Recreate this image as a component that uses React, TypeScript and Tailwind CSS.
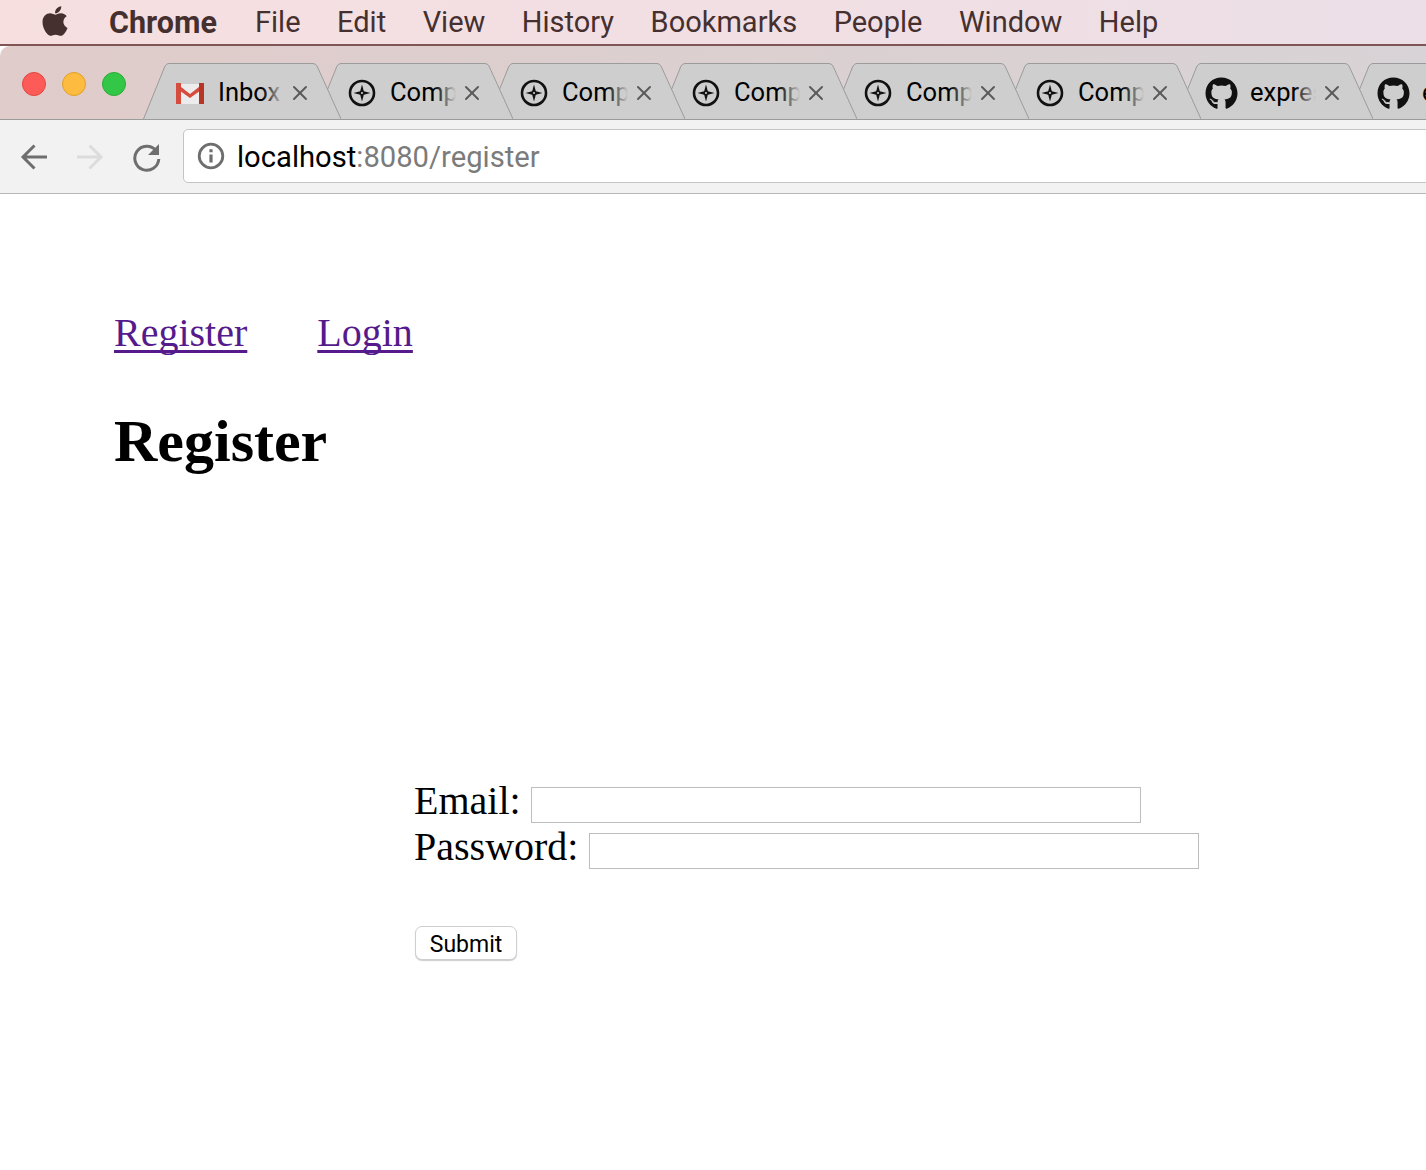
import React from "react";
import { FaApple, FaGithub } from "react-icons/fa";
import { X } from "lucide-react";

const sans = "font-['Roboto','Liberation_Sans',sans-serif]";

const menus = ["File", "Edit", "View", "History", "Bookmarks", "People", "Window", "Help"];

const GmailIcon = () => (
  <svg width="30" height="22" viewBox="0 0 30 22">
    <path d="M1 2h28v20H1z" fill="#ececec" />
    <path d="M1 1l14 11L29 1v5L15 16 1 6z" fill="#d54c3f" />
    <path d="M1 1h5v21H1z" fill="#d54c3f" />
    <path d="M24 1h5v21h-5z" fill="#b63524" />
  </svg>
);

const CompassIcon = () => (
  <svg width="28" height="28" viewBox="0 0 28 28">
    <circle cx="14" cy="14" r="12" fill="none" stroke="#111" strokeWidth="2.600" />
    <path d="M14 5.500l1.800 6.700 6.700 1.800-6.700 1.800-1.800 6.700-1.800-6.700L5.500 14l6.700-1.800z" fill="#111" />
    <circle cx="14" cy="14" r="1.100" fill="#cecece" />
  </svg>
);

const ChevronArrow = ({ flip, color }: { flip?: boolean; color: string }) => (
  <svg className={`shrink-0 ${flip ? "-scale-x-100" : ""}`} width="28" height="28" viewBox="0 0 28 28">
    <path d="M27 14H3M14.500 2.500L3 14l11.500 11.500" fill="none" stroke={color} strokeWidth="3" />
  </svg>
);

const Tab = ({ icon, title, index }: { icon: React.ReactNode; title: string; index: number }) => (
  <div
    className="relative h-[56px] w-[198px] shrink-0 -mr-[26px]"
    style={{ zIndex: 20 - index }}
  >
    <svg className="absolute inset-0" width="198" height="56" viewBox="0 0 198 56">
      <path
        d="M0.500 56L22 3Q23.500 0.500 26 0.500H170Q172.500 0.500 174 3L198 56"
        fill="#cecece"
        stroke="#9b9b9b"
      />
    </svg>
    <div className="relative flex h-full items-center pt-[2px]">
      <div className="flex w-[75px] shrink-0 justify-center pl-[18px] pr-0 pt-[2px]">{icon}</div>
      <div className="relative w-[66px] overflow-hidden">
        <span className={`${sans} block whitespace-nowrap text-[25.500px] leading-[32px] text-black`}>{title}</span>
        <div className="absolute inset-y-0 right-0 w-[22px] bg-gradient-to-r from-transparent to-[#cecece]" />
      </div>
      <X className="ml-[4px] mt-[1px] shrink-0 text-[#5a5a5a]" size={24} strokeWidth={2} />
    </div>
  </div>
);

export default function App() {
  return (
    <div className="h-[1170px] w-[1426px] overflow-hidden bg-white">
      {/* mac menu bar */}
      <div className={`${sans} flex h-[44px] items-center bg-gradient-to-r from-[#f7dfe0] to-[#ecdfe7] pt-[1px] text-[29px] text-[#45302f]`}>
        <FaApple className="ml-[40px] -mt-[4px] w-[30px] shrink-0 text-[#45302f]" size={34} />
        <span className="ml-[39px] w-[146px] shrink-0 text-[30.500px] font-bold">Chrome</span>
        <div className="flex gap-[36.500px]">
          {menus.map((m) => (
            <span key={m}>{m}</span>
          ))}
        </div>
      </div>
      <div className="h-[2px] bg-[#7f5556]" />

      {/* tab strip */}
      <div className="flex h-[74px] items-end overflow-hidden rounded-tl-[10px] border-b border-[#9b9b9b] bg-gradient-to-r from-[#e0ccca] to-[#d8d3d6]">
        <div className="mb-[19px] ml-[22px] flex w-[121px] shrink-0 gap-[16px] self-end pb-[4px]">
          <div className="h-[24px] w-[24px] rounded-full border border-[#e2463f] bg-[#fc5b57]" />
          <div className="h-[24px] w-[24px] rounded-full border border-[#e0a028] bg-[#fdbc40]" />
          <div className="h-[24px] w-[24px] rounded-full border border-[#2aac36] bg-[#33c748]" />
        </div>
        <Tab index={0} icon={<GmailIcon />} title="Inbox" />
        <Tab index={1} icon={<CompassIcon />} title="Compose" />
        <Tab index={2} icon={<CompassIcon />} title="Compose" />
        <Tab index={3} icon={<CompassIcon />} title="Compose" />
        <Tab index={4} icon={<CompassIcon />} title="Compose" />
        <Tab index={5} icon={<CompassIcon />} title="Compose" />
        <Tab index={6} icon={<FaGithub className="text-[#111]" size={33} />} title="express" />
        <Tab index={7} icon={<FaGithub className="text-[#111]" size={33} />} title="express" />
      </div>

      {/* toolbar */}
      <div className="flex h-[74px] items-center border-b border-[#b8b8b8] bg-[#f2f2f2]">
        <div className="ml-[20px]">
          <ChevronArrow color="#6e6e6e" />
        </div>
        <div className="ml-[28px]">
          <ChevronArrow flip color="#dcdcdc" />
        </div>
        <svg className="ml-[27px] shrink-0" width="32" height="32" viewBox="0 0 32 32">
          <path d="M25 9.500A12 12 0 1 0 27.800 18" fill="none" stroke="#6e6e6e" strokeWidth="3" />
          <path d="M28 3v11H17z" fill="#6e6e6e" />
        </svg>
        <div className="mb-[1px] ml-[20px] flex h-[54px] w-[1300px] shrink-0 items-center rounded-[5px] border border-[#c4c4c4] bg-white">
          <svg className="ml-[13px] shrink-0" width="28" height="28" viewBox="0 0 28 28">
            <circle cx="14" cy="14" r="11.800" fill="none" stroke="#6e6e6e" strokeWidth="2.800" />
            <path d="M12.400 12.500h3.200v8h-3.200zM12.400 7.300h3.200v3h-3.200z" fill="#6e6e6e" />
          </svg>
          <span className={`${sans} ml-[12px] pt-[4px] text-[29.200px] text-black`}>
            localhost<span className="text-[#7b7b7b]">:8080/register</span>
          </span>
        </div>
      </div>

      {/* page */}
      <div className="font-['Liberation_Serif',serif] text-black">
        <div className="ml-[114px] mt-[114px] flex gap-[70px] text-[40px] leading-[50px] text-[#551a8b]">
          <a href="#" className="underline decoration-[3px] underline-offset-[4px] [text-decoration-skip-ink:none]">Register</a>
          <a href="#" className="underline decoration-[3px] underline-offset-[4px] [text-decoration-skip-ink:none]">Login</a>
        </div>
        <h1 className="ml-[114px] mt-[48px] text-[60px] font-bold leading-[70px]">Register</h1>
        <form className="ml-[414px] mt-[302px] text-[40px] leading-[46px]">
          <div className="flex items-center">
            <label>Email:</label>
            <input className="ml-[10px] mt-[8px] h-[36px] w-[610px] border border-[#bdbdbd] bg-white" />
          </div>
          <div className="flex items-center">
            <label>Password:</label>
            <input className="ml-[11px] mt-[8px] h-[36px] w-[610px] border border-[#bdbdbd] bg-white" />
          </div>
          <button
            type="button"
            className={`${sans} ml-[1px] mt-[56px] block h-[34px] w-[102px] rounded-[7px] border border-[#cfcfcf] bg-white pt-[3px] text-[23px] leading-[28px] text-black shadow-[0_1px_1px_rgba(0,0,0,0.2)]`}
          >
            Submit
          </button>
        </form>
      </div>
    </div>
  );
}
